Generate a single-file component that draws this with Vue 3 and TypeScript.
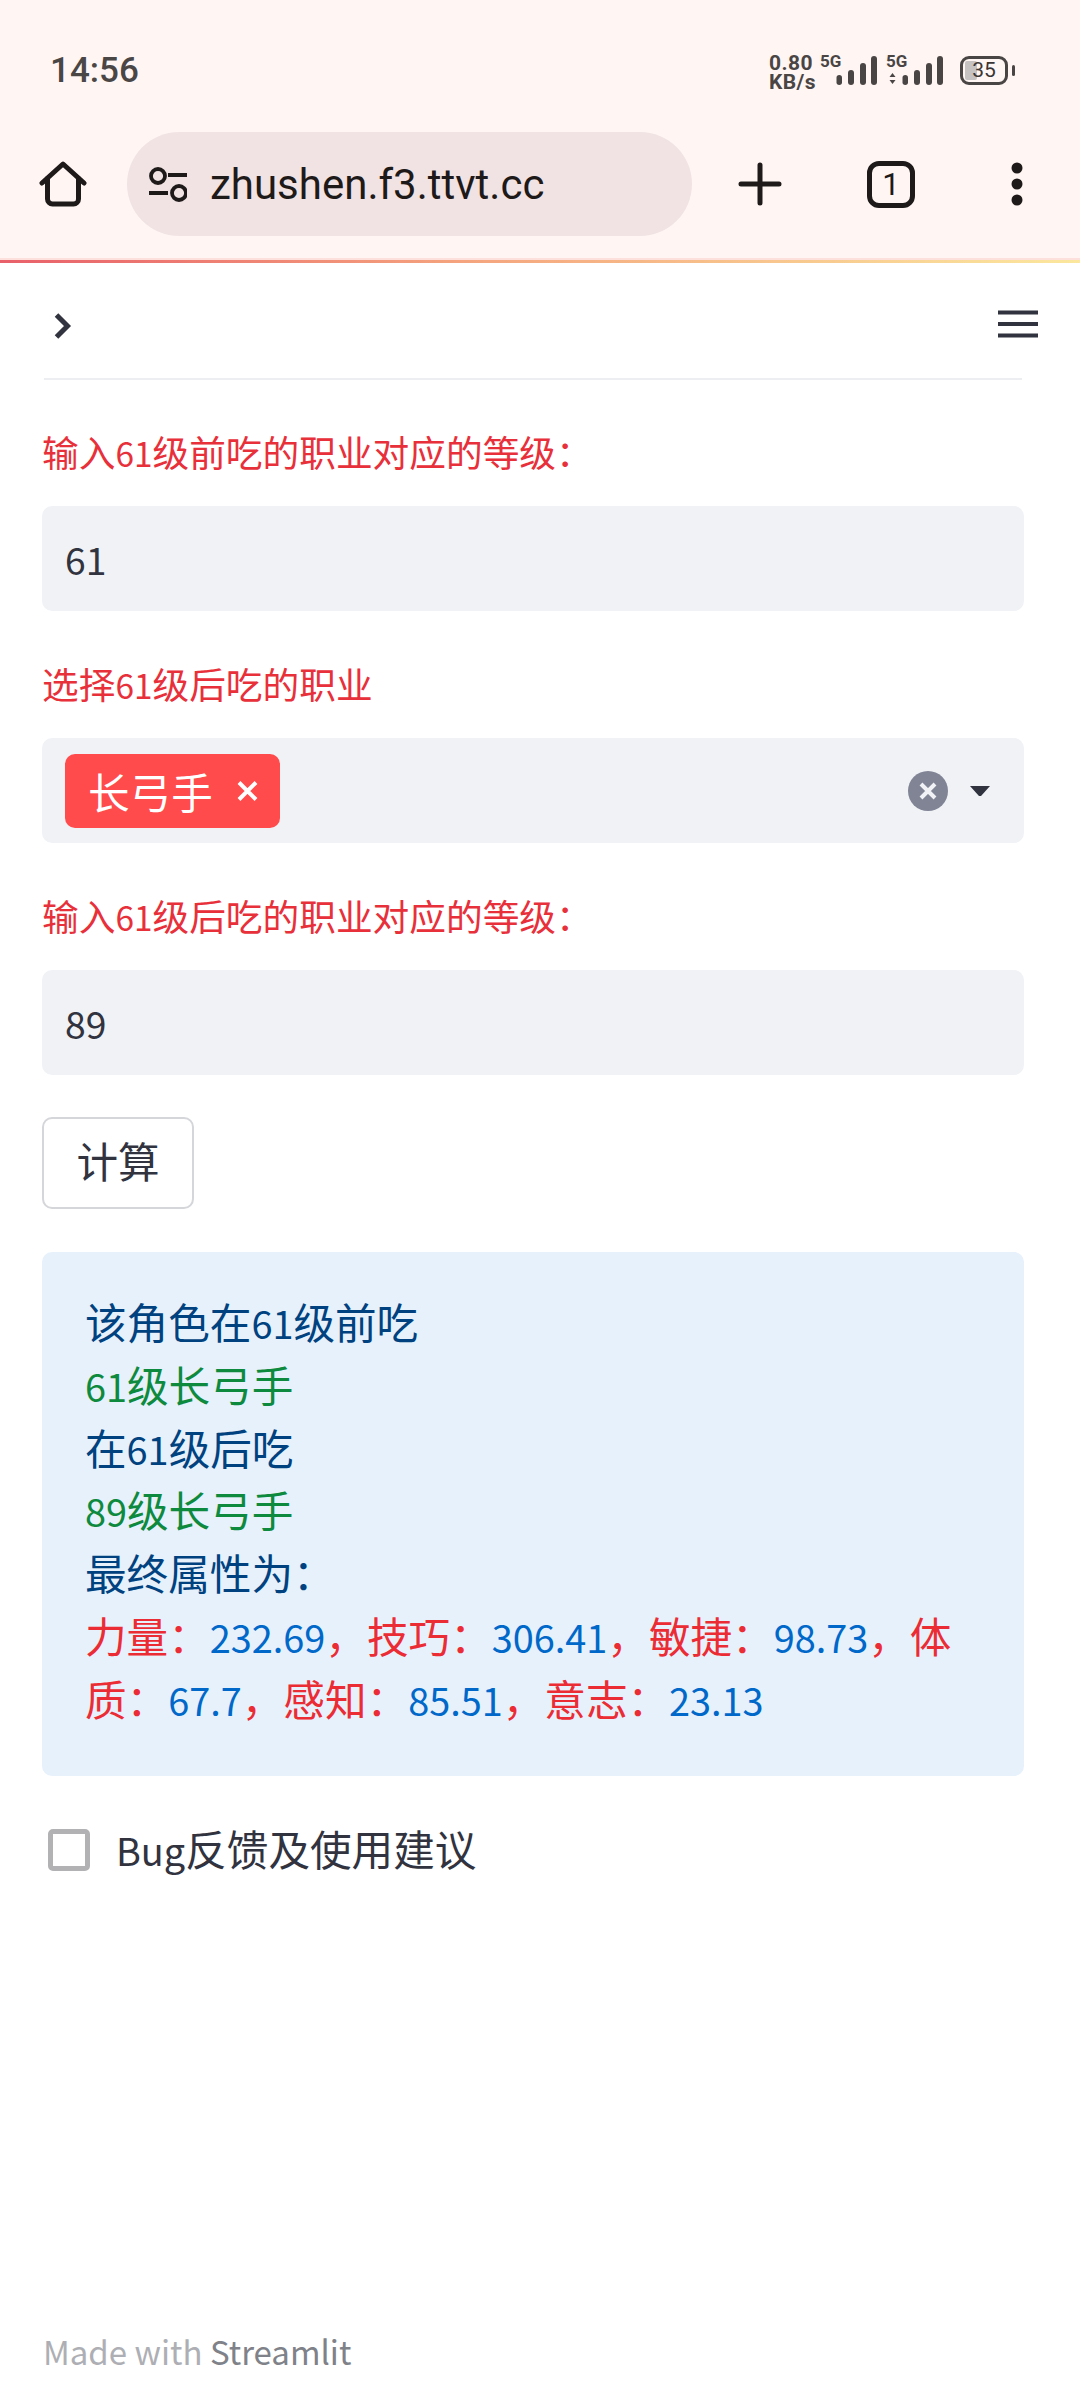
<script setup lang="ts">
// Streamlit result page inside a mobile browser
const stats = [
  { name: '力量', value: '232.69', sep: '，' },
  { name: '技巧', value: '306.41', sep: '，' },
  { name: '敏捷', value: '98.73', sep: '，' },
  { name: '体质', value: '67.7', sep: '，' },
  { name: '感知', value: '85.51', sep: '，' },
  { name: '意志', value: '23.13', sep: '' },
]
</script>

<template>
  <div class="page">
    <div class="chrome">
      <div class="status">
        <span class="time">14:56</span>
        <div class="status-icons">
          <div class="speed"><span>0.80</span><span>KB/s</span></div>
          <div class="sim">
            <div class="five-g-wrap"><span class="five-g">5G</span></div>
            <svg width="42" height="29" viewBox="0 0 42 29"><g fill="#4a4545"><rect x="0.5" y="19" width="5.500" height="10" rx="2.750" /><rect x="12" y="14" width="6" height="15" rx="3" /><rect x="24" y="7" width="6" height="22" rx="3" /><rect x="35" y="0" width="6" height="29" rx="3" /></g></svg>
          </div>
          <div class="sim">
            <div class="five-g-wrap">
              <span class="five-g">5G</span>
              <svg class="updown" width="7" height="11" viewBox="0 0 7 11"><path d="M3.500 0 6.500 4H.5zM3.500 11 .5 7h6z" fill="#4a4545" /></svg>
            </div>
            <svg width="42" height="29" viewBox="0 0 42 29"><g fill="#4a4545"><rect x="0.5" y="19" width="5.500" height="10" rx="2.750" /><rect x="12" y="14" width="6" height="15" rx="3" /><rect x="24" y="7" width="6" height="22" rx="3" /><rect x="35" y="0" width="6" height="29" rx="3" /></g></svg>
          </div>
          <div class="battery-wrap">
            <div class="battery"><i class="battery-fill" /><span>35</span></div>
            <i class="battery-cap" />
          </div>
        </div>
      </div>
      <div class="toolbar">
        <svg class="home" width="48" height="46" viewBox="0 0 48 46"><path d="M3 22 24 3l21 19M8.500 17v21a5 5 0 0 0 5 5h21a5 5 0 0 0 5-5V17" fill="none" stroke="#1f1a1a" stroke-width="5" stroke-linecap="round" stroke-linejoin="round" /></svg>
        <div class="url">
          <svg width="38" height="35" viewBox="0 0 38 35"><g fill="none" stroke="#1f1a1a" stroke-width="3.800"><circle cx="9" cy="9" r="7" /><circle cx="30" cy="26" r="7" /><path d="M19 8h19M0 26h19" /></g></svg>
          <span>zhushen.f3.ttvt.cc</span>
        </div>
        <svg class="plus" width="44" height="44" viewBox="0 0 44 44"><path d="M22 3v38M3 22h38" stroke="#1f1a1a" stroke-width="5" stroke-linecap="round" /></svg>
        <div class="tabs">1</div>
        <svg class="dots" width="14" height="44" viewBox="0 0 14 44"><g fill="#1f1a1a"><circle cx="7" cy="6" r="5.500" /><circle cx="7" cy="22" r="5.500" /><circle cx="7" cy="38" r="5.500" /></g></svg>
      </div>
    </div>
    <div class="progress" />

    <header class="app-header">
      <svg class="chevron" width="18" height="26" viewBox="0 0 18 26"><path d="M2.500 2 13.500 13 2.500 24" fill="none" stroke="#31333f" stroke-width="5" /></svg>
      <svg width="40" height="28" viewBox="0 0 40 28"><path d="M0 2.500h40M0 14h40M0 25.500h40" stroke="#31333f" stroke-width="4" /></svg>
    </header>

    <main class="content">
      <hr class="rule" />
      <div class="label">输入<span class="lat">61</span>级前吃的职业对应的等级：</div>
      <div class="field num">61</div>

      <div class="label">选择<span class="lat">61</span>级后吃的职业</div>
      <div class="field">
        <div class="tag">
          <span>长弓手</span>
          <svg width="21" height="20" viewBox="0 0 21 20"><path d="M2 1.500l17 17M19 1.500l-17 17" stroke="#fff" stroke-width="4" /></svg>
        </div>
        <svg class="clear" width="40" height="40" viewBox="0 0 40 40"><circle cx="20" cy="20" r="20" fill="#808495" /><path d="M13 13l14 14M27 13 13 27" stroke="#f0f2f6" stroke-width="4" /></svg>
        <svg class="caret" width="20" height="10" viewBox="0 0 20 10"><path d="M0 0h20L11.500 9.500a2 2 0 0 1-3 0z" fill="#31333f" /></svg>
      </div>

      <div class="label">输入<span class="lat">61</span>级后吃的职业对应的等级：</div>
      <div class="field num">89</div>

      <button class="calc" type="button">计算</button>

      <section class="info">
        <p>该角色在<span class="lat">61</span>级前吃</p>
        <p class="green"><span class="lat">61</span>级长弓手</p>
        <p>在<span class="lat">61</span>级后吃</p>
        <p class="green"><span class="lat">89</span>级长弓手</p>
        <p>最终属性为：</p>
        <p class="stats">
          <template v-for="s in stats" :key="s.name"><span class="red">{{ s.name }}：</span><span class="blue lat">{{ s.value }}</span><span class="red">{{ s.sep }}</span></template>
        </p>
      </section>

      <label class="check">
        <i class="box" />
        <span class="check-text"><span class="lat">Bug</span>反馈及使用建议</span>
      </label>
    </main>

    <footer class="foot">Made with <span>Streamlit</span></footer>
  </div>
</template>

<style scoped>
.page {
  width: 1080px;
  height: 2400px;
  display: flex;
  flex-direction: column;
  background: #fff;
  font-family: "Noto Sans CJK SC", "Noto Sans", sans-serif;
  color: #31333f;
  overflow: hidden;
}

/* digits and latin in the CJK face run wide, this brings them to Source Sans size */
.lat {
  font-size: 0.91em;
  line-height: 0;
}

.chrome {
  height: 260px;
  box-sizing: border-box;
  border-bottom: 2px solid #fde0db;
  background: #fff6f4;
  display: flex;
  flex-direction: column;
  flex: none;
}

.status {
  height: 132px;
  padding: 8px 65px 0 50px;
  display: flex;
  align-items: center;
  justify-content: space-between;
  box-sizing: border-box;
}

.time {
  font: 500 35px Roboto, sans-serif;
  color: #4a4646;
}

.status-icons {
  display: flex;
  align-items: flex-end;
  height: 30px;
  color: #4a4545;
  font-family: Roboto, sans-serif;
}

.speed {
  display: flex;
  flex-direction: column;
  width: 47px;
  margin-right: 4px;
  margin-bottom: -7px;
  font-size: 21px;
  font-weight: 700;
  line-height: 19px;
  letter-spacing: 0.4px;
}

.sim {
  display: flex;
  align-items: flex-end;
  height: 30px;
  margin-right: 8px;
  flex: none;
}

.five-g-wrap {
  width: 16px;
  height: 30px;
  position: relative;
}

.five-g {
  position: absolute;
  left: 0;
  top: -2px;
  font-size: 17px;
  font-weight: 700;
  line-height: 17px;
  white-space: nowrap;
}

.updown {
  position: absolute;
  left: 3px;
  top: 18px;
}

.battery-wrap {
  display: flex;
  align-items: center;
  gap: 4px;
  margin-left: 8px;
  height: 30px;
}

.battery {
  position: relative;
  width: 48px;
  height: 29px;
  border: 3.500px solid #4a4545;
  border-radius: 9px;
  box-sizing: border-box;
  display: flex;
  align-items: center;
  justify-content: center;
  font-size: 21px;
  color: #3a3535;
  overflow: hidden;
}

.battery span {
  position: relative;
}

.battery-fill {
  position: absolute;
  left: 2px;
  top: 2px;
  bottom: 2px;
  width: 12px;
  border-radius: 2px;
  background: #c6c2c1;
}

.battery-cap {
  width: 3px;
  height: 11px;
  border-radius: 2px;
  background: #4a4545;
}

.toolbar {
  height: 104px;
  display: flex;
  align-items: center;
}

.home {
  margin-left: 39px;
  flex: none;
}

.url {
  margin-left: 40px;
  width: 565px;
  height: 104px;
  border-radius: 52px;
  background: #f1e3e3;
  display: flex;
  align-items: center;
  gap: 23px;
  padding-left: 22px;
  box-sizing: border-box;
  font: 400 42px Roboto, sans-serif;
  color: #1f1a1a;
}

.plus {
  margin-left: 46px;
  flex: none;
}

.tabs {
  margin-left: 85px;
  width: 48px;
  height: 47px;
  flex: none;
  border: 5px solid #1f1a1a;
  border-radius: 12px;
  box-sizing: border-box;
  display: flex;
  align-items: center;
  justify-content: center;
  font: 400 31px Roboto, sans-serif;
  color: #1f1a1a;
}

.dots {
  margin-left: 95px;
  flex: none;
}

.progress {
  flex: none;
  height: 3px;
  background: linear-gradient(to right, #e8606a, #f5a77f 45%, #fbe79e);
}

.app-header {
  flex: none;
  height: 115px;
  padding: 47px 42px 0 54px;
  box-sizing: border-box;
  display: flex;
  align-items: flex-start;
  justify-content: space-between;
}

.chevron {
  margin-top: 3px;
}

.content {
  padding: 0 56px 0 42px;
  display: flex;
  flex-direction: column;
  align-items: stretch;
}

.rule {
  margin: 0 2px;
  border: 0;
  height: 2px;
  background: #eceef1;
}

.label {
  height: 54px;
  line-height: 50px;
  margin: 47px 0 26px;
  font-size: 36.700px;
  color: #e8303a;
  white-space: nowrap;
}

.rule + .label {
  margin-top: 46px;
}

.field {
  height: 105px;
  border-radius: 10px;
  background: #f0f2f6;
  display: flex;
  align-items: center;
  padding: 0 23px;
}

.num {
  font-size: 37.300px;
}

.tag {
  width: 215px;
  height: 74px;
  box-sizing: border-box;
  padding: 0 22px 0 23px;
  border-radius: 10px;
  background: #ff4b4b;
  color: #fff;
  display: flex;
  align-items: center;
  justify-content: space-between;
  font-size: 41.600px;
}

.clear {
  margin-left: auto;
}

.caret {
  margin-left: 22px;
  margin-right: 11px;
}

.calc {
  align-self: flex-start;
  margin-top: 42px;
  width: 152px;
  height: 92px;
  border: 2px solid #d5d6da;
  border-radius: 10px;
  background: #fff;
  font: inherit;
  font-size: 41.600px;
  color: #31333f;
  padding: 0 0 6px;
}

.info {
  margin-top: 43px;
  height: 524px;
  border-radius: 10px;
  background: #e6f1fc;
  box-sizing: border-box;
  padding: 38px 43px 0;
  font-size: 41.600px;
  line-height: 62.800px;
  color: #004280;
}

.info p {
  margin: 0;
}

.green {
  color: #0e8a3e;
}

.red {
  color: #ec2c34;
}

.blue {
  color: #0068c9;
}

.check {
  display: flex;
  align-items: center;
  margin-top: 47px;
  margin-left: 6px;
  gap: 26px;
  height: 54px;
  font-size: 41.600px;
}

.check-text {
  margin-top: -5px;
}

.box {
  width: 42px;
  height: 42px;
  flex: none;
  box-sizing: border-box;
  border: 5px solid #b2b2b5;
  border-radius: 5px;
}

.foot {
  margin-top: auto;
  margin-bottom: 30px;
  padding-left: 43px;
  font-size: 33px;
  line-height: 38px;
  color: #aeafb4;
}

.foot span {
  color: #808289;
}
</style>

<style>
html, body {
  margin: 0;
  background: #fff;
}
</style>
